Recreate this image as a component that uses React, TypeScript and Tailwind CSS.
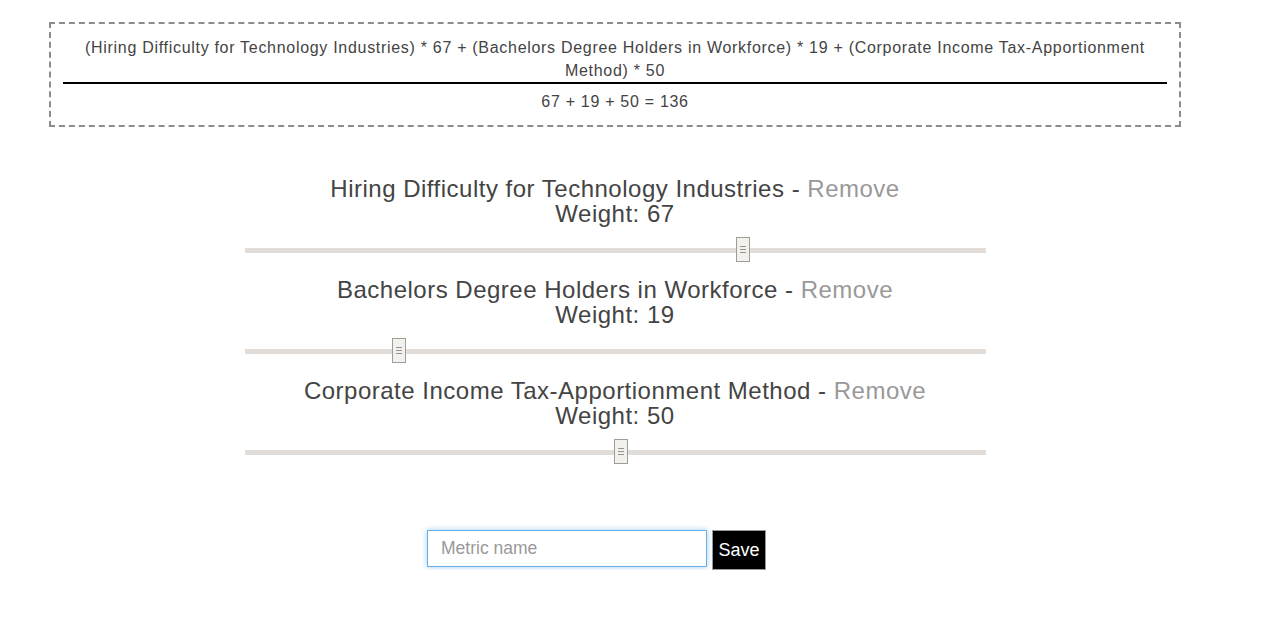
import React from "react";

interface Metric {
    name: string;
    weight: number;
}

const metrics: Metric[] = [
    { name: "Hiring Difficulty for Technology Industries", weight: 67 },
    { name: "Bachelors Degree Holders in Workforce", weight: 19 },
    { name: "Corporate Income Tax-Apportionment Method", weight: 50 },
];

const Slider: React.FC<{ value: number }> = ({ value }) => {
    // thumb runs from 12px to 727px across the track
    const left = 12 + (value / 100) * 715;
    return (
        <div className="pt-[22px] pb-[24px]">
            <div className="relative w-[741px] h-[5px] mx-auto bg-[#e2ddd8]">
                <div
                    className="absolute top-[-11px] w-[14px] h-[25px] bg-[#f3f1ee] border border-[#a29c96] flex flex-col items-center justify-center gap-[2px]"
                    style={{ left }}
                >
                    <span className="block w-[6px] h-px bg-[#9a948e]" />
                    <span className="block w-[6px] h-px bg-[#9a948e]" />
                    <span className="block w-[6px] h-px bg-[#9a948e]" />
                </div>
            </div>
        </div>
    );
};

const App: React.FC = () => {
    const formula = metrics.map((m) => `(${m.name}) * ${m.weight}`).join(" + ");
    const total = metrics.reduce((s, m) => s + m.weight, 0);

    return (
        <div className="w-[1230px] pt-[22px] font-['Liberation_Sans',Arial,sans-serif] text-[#444]">
            {/* formula box */}
            <div className="mx-[49px] border-2 border-dashed border-[#8c8c8c] px-3 py-3 text-center text-[16px] leading-[23px] tracking-[0.7px]">
                <div>{formula}</div>
                <div className="border-t-2 border-black mb-[6px]" />
                <div>
                    {metrics.map((m) => m.weight).join(" + ")} = {total}
                </div>
            </div>

            {/* sliders */}
            <div className="pt-[49px]">
                {metrics.map((m) => (
                    <div key={m.name}>
                        <div className="text-center text-[24px] leading-[25px] tracking-[0.5px]">
                            <div>
                                {m.name} - <span className="text-[#999]">Remove</span>
                            </div>
                            <div>Weight: {m.weight}</div>
                        </div>
                        <Slider value={m.weight} />
                    </div>
                ))}
            </div>

            {/* save row */}
            <div className="flex items-start gap-[5px] pl-[427px] pt-[51px]">
                <input
                    type="text"
                    placeholder="Metric name"
                    className="w-[280px] h-[37px] px-[13px] text-[17.5px] border border-[#66afe9] shadow-[0_0_6px_rgba(102,175,233,0.6)] outline-none placeholder:text-[#999] text-[#444]"
                />
                <button className="w-[54px] h-[40px] bg-black text-white text-[18px] border border-[#999]">
                    Save
                </button>
            </div>
        </div>
    );
};

export default App;
